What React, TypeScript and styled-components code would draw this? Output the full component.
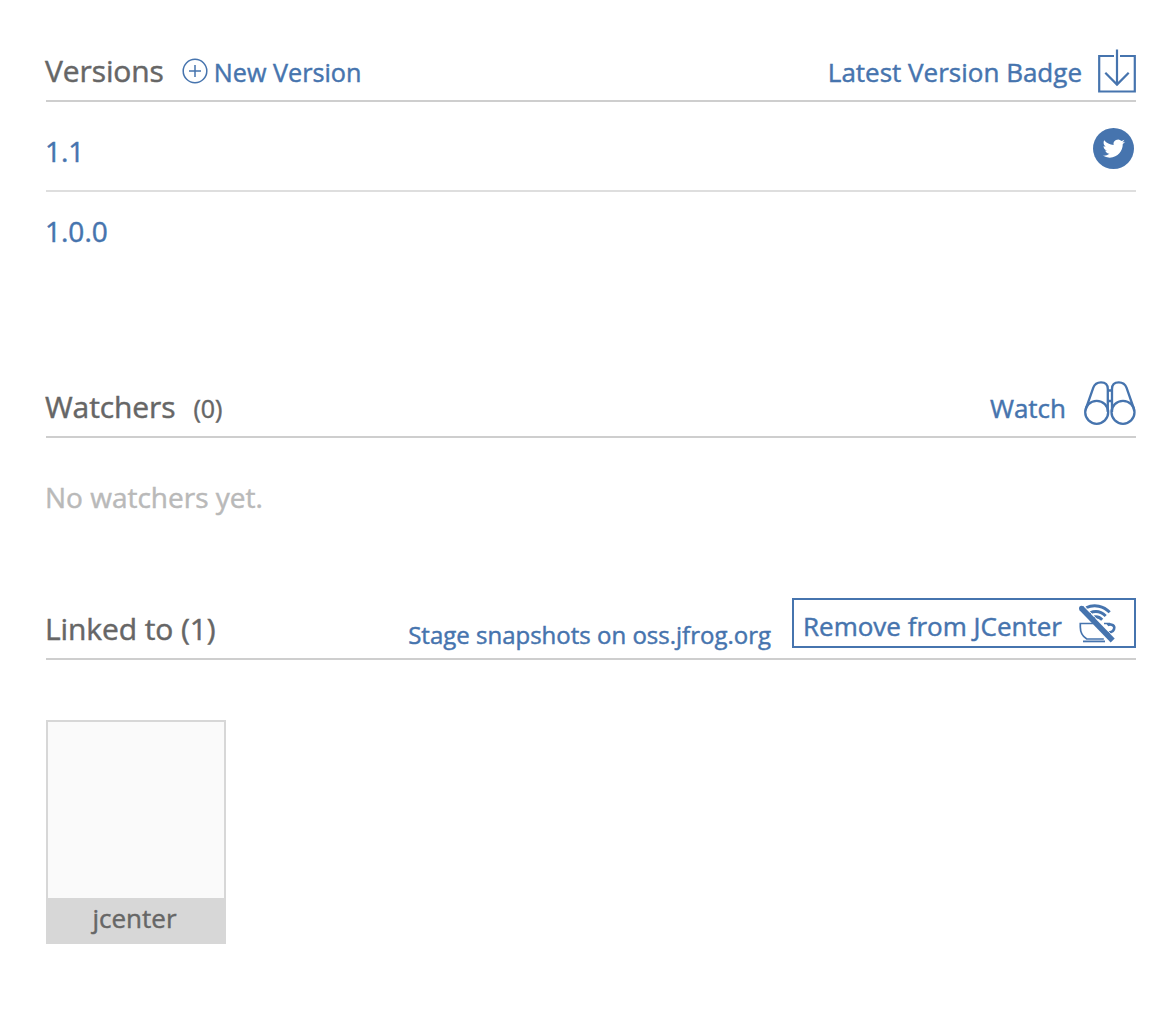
import React from 'react';
import styled, { createGlobalStyle } from 'styled-components';

const blue = '#4674ae';

const GlobalStyle = createGlobalStyle`
  body { margin: 0; background: #fff; }
  * { box-sizing: border-box; }
`;

const Page = styled.main`
  width: 1168px;
  height: 1034px;
  padding: 40px 32px 0 46px;
  color: #666;
  font-family: 'Open Sans', 'Noto Sans', sans-serif;
  -webkit-text-stroke: 0.45px currentColor;
  overflow: hidden;
`;

const Section = styled.section<{ $height: number }>`
  height: ${p => p.$height}px;
`;

const Header = styled.header`
  display: flex;
  justify-content: space-between;
  height: 62px;
  border-bottom: 2px solid #cecece;
`;

const Group = styled.div<{ $gap?: number }>`
  display: flex;
  align-items: baseline;
  gap: ${p => p.$gap ?? 0}px;
  padding-top: 10px;
`;

const Title = styled.h2`
  margin: 0 0 0 -1px;
  font-size: 30px;
  font-weight: 400;
  line-height: 42px;
  letter-spacing: -0.1px;
  white-space: pre;
`;

const Count = styled.span`
  font-size: 25px;
  line-height: 42px;
`;

const Link = styled.a<{ $size?: number }>`
  color: ${blue};
  font-size: ${p => p.$size ?? 26}px;
  line-height: 42px;
  white-space: nowrap;
`;

const IconBox = styled.span<{ $top?: number; $left?: number }>`
  display: flex;
  align-self: flex-start;
  flex: none;
  padding-top: ${p => p.$top ?? 0}px;
  padding-left: ${p => p.$left ?? 0}px;
  color: ${blue};
`;

const Actions = styled.div`
  display: flex;
  align-items: flex-start;
`;

const ActionText = styled.div<{ $top: number }>`
  padding-top: ${p => p.$top}px;
`;

const VersionRow = styled.div<{ $last?: boolean }>`
  display: flex;
  justify-content: space-between;
  height: ${p => (p.$last ? 80 : 90)}px;
  padding: ${p => (p.$last ? 18 : 28)}px 2px 0 0;
  border-bottom: ${p => (p.$last ? 0 : 2)}px solid #dedede;
`;

const VersionLink = styled(Link)`
  margin-left: -1px;
  font-size: 28px;
`;

const ShareLink = styled.a`
  display: flex;
  height: 41px;
  margin-top: -2px;
  color: ${blue};
`;

const Empty = styled.p`
  margin: 0 0 0 -1px;
  padding-top: 38px;
  color: #b9b9b9;
  font-size: 28px;
  line-height: 42px;
`;

const RemoveButton = styled.button`
  display: flex;
  width: 344px;
  height: 50px;
  margin: 0 0 0 21px;
  padding: 0 0 0 9px;
  border: 2px solid ${blue};
  background: #fff;
  color: ${blue};
  font: 26px/42px 'Open Sans', 'Noto Sans', sans-serif;
  -webkit-text-stroke: inherit;
  white-space: nowrap;
`;

const ButtonLabel = styled.span`
  width: 276px;
  padding-top: 5px;
  text-align: left;
`;

const Tile = styled.div`
  width: 180px;
  height: 224px;
  margin-top: 60px;
  border: 2px solid #d7d7d7;
  background: #fafafa;
  display: flex;
  flex-direction: column;
  justify-content: flex-end;
`;

const TileName = styled.div`
  height: 44px;
  padding-right: 3px;
  background: #d7d7d7;
  font-size: 26px;
  line-height: 40px;
  text-align: center;
`;

const PlusIcon = () => (
  <svg width="26" height="26" viewBox="0 0 26 26" fill="none" stroke="currentColor" strokeWidth="1.5">
    <circle cx="13" cy="13" r="11.8" />
    <path d="M13 7v12M7 13h12" />
  </svg>
);

const DownloadIcon = () => (
  <svg width="38" height="44" viewBox="0 0 38 44" fill="none" stroke="currentColor" strokeWidth="2.2">
    <path d="M16 7H1.200v35.500h35.600V7H22" />
    <path d="M19 .5V36M7.300 23.800 19 35.600l11.700-11.800" />
  </svg>
);

const TwitterIcon = () => (
  <svg width="41" height="41" viewBox="0 0 41 41">
    <circle cx="20.500" cy="20.500" r="20.500" fill="currentColor" />
    <path
      transform="translate(9.700 9.400) scale(.93)"
      fill="#fff"
      d="M23.953 4.570a10 10 0 01-2.825.775 4.958 4.958 0 002.163-2.723c-.951.555-2.005.959-3.127 1.184a4.920 4.920 0 00-8.384 4.482C7.690 8.095 4.067 6.130 1.640 3.162a4.822 4.822 0 00-.666 2.475c0 1.710.870 3.213 2.188 4.096a4.904 4.904 0 01-2.228-.616v.060a4.923 4.923 0 003.946 4.827 4.996 4.996 0 01-2.212.085 4.936 4.936 0 004.604 3.417 9.867 9.867 0 01-6.102 2.105c-.390 0-.779-.023-1.170-.067a13.995 13.995 0 007.557 2.209c9.053 0 13.998-7.496 13.998-13.985 0-.210 0-.420-.015-.630A9.935 9.935 0 0024 4.590z"
    />
  </svg>
);

const BinocularsIcon = () => (
  <svg width="52" height="44" viewBox="0 0 52 44" fill="none" stroke="currentColor" strokeWidth="2.300">
    <circle cx="12.700" cy="31.300" r="11.500" />
    <circle cx="39" cy="31.300" r="11.500" />
    <path d="M1.800 28 9.300 6.700C10.800 2.500 13 1.400 17 1.400c4.700 0 6.800 2.500 6.800 6.600v23M50 28 42.500 6.700C41 2.500 38.700 1.400 34.800 1.400c-4.700 0-6.800 2.500-6.800 6.600v23" />
    <path d="M24 9.500h4M24 20h4" />
  </svg>
);

const CupIcon = () => (
  <svg width="38" height="40" viewBox="0 0 38 40" fill="none" stroke="currentColor">
    <path strokeWidth="1.700" d="M14 19.500H1.300v3.500c0 5.500 2.300 9.500 6.500 12h17M25 19.500h6" />
    <path strokeWidth="1.800" d="M4 37.400h22" />
    <path strokeWidth="2.600" d="M28.500 21.300c2-1.700 6.800-.8 6.800 2.200 0 3.500-2.500 4.800-6.300 5.300" />
    <path strokeWidth="2.900" d="M7 3.800c8.500-4 17.700-1.700 23.700 4.500M11 8.800c5.500-2.300 11.500-1 15.700 3.300M15 13c3.200-.8 5.700.2 8.200 2.800" />
    <path stroke="#fff" strokeWidth="1" d="m5 1.500 31 33" />
    <path strokeWidth="5.500" d="m2.200 4 31.500 32.500" />
    <circle cx="2.500" cy="4.300" r="2.500" fill="currentColor" stroke="none" />
  </svg>
);

export default function App() {
  return (
    <>
      <GlobalStyle />
      <Page>
        <Section $height={336}>
          <Header>
            <Group>
              <Title>Versions</Title>
              <IconBox $top={8} $left={18}><PlusIcon /></IconBox>
              <IconBox $left={6} $top={1}><Link $size={25.2}>New Version</Link></IconBox>
            </Group>
            <Actions>
              <ActionText $top={11}><Link>Latest Version Badge</Link></ActionText>
              <IconBox $top={9} $left={16}><DownloadIcon /></IconBox>
            </Actions>
          </Header>
          <VersionRow>
            <VersionLink>1.1</VersionLink>
            <ShareLink><TwitterIcon /></ShareLink>
          </VersionRow>
          <VersionRow $last>
            <VersionLink>1.0.0</VersionLink>
          </VersionRow>
        </Section>
        <Section $height={222}>
          <Header>
            <Group $gap={18}>
              <Title>Watchers</Title>
              <Count>(0)</Count>
            </Group>
            <Actions>
              <ActionText $top={11}><Link>Watch</Link></ActionText>
              <IconBox $top={5} $left={18}><BinocularsIcon /></IconBox>
            </Actions>
          </Header>
          <Empty>No watchers yet.</Empty>
        </Section>
        <Section $height={380}>
          <Header>
            <Group>
              <Title>Linked to (1)</Title>
            </Group>
            <Actions>
              <ActionText $top={16}><Link $size={24}>Stage snapshots on oss.jfrog.org</Link></ActionText>
              <RemoveButton>
                <ButtonLabel>Remove from JCenter</ButtonLabel>
                <IconBox $top={4}><CupIcon /></IconBox>
              </RemoveButton>
            </Actions>
          </Header>
          <Tile>
            <TileName>jcenter</TileName>
          </Tile>
        </Section>
      </Page>
    </>
  );
}
